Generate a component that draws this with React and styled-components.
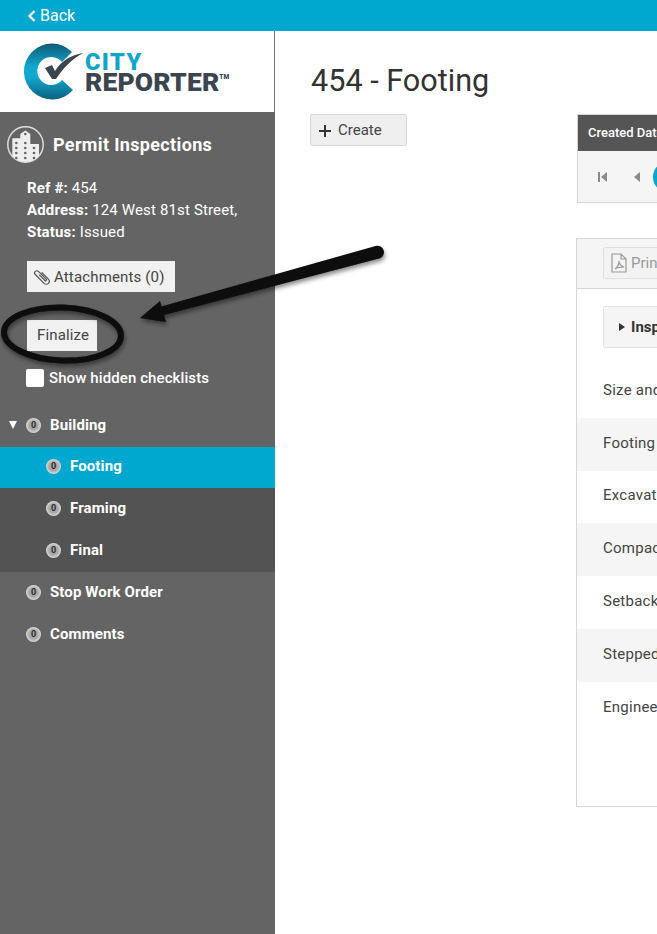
import React from "react";
import styled, { createGlobalStyle } from "styled-components";

const GlobalStyle = createGlobalStyle`
    html, body {
        margin: 0;
        padding: 0;
        height: 100%;
        overflow: hidden;
        background: #fff;
        font-family: Roboto, "Liberation Sans", sans-serif;
        color: #333;
    }
    #root { height: 100%; }
    * { box-sizing: border-box; }
`;

const Page = styled.div`
    position: relative;
    width: 657px;
    height: 934px;
    overflow: hidden;
    display: flex;
    flex-direction: column;
`;
const TopBar = styled.div`
    height: 31px;
    flex: none;
    background: #00a7ce;
    color: #fff;
    font-size: 16px;
    display: flex;
    align-items: center;
    gap: 4px;
    padding-left: 27px;
`;
const Body = styled.div`
    flex: 1;
    display: flex;
    min-height: 0;
`;
const Sidebar = styled.aside`
    width: 275px;
    flex: none;
    background: #646464;
    color: #fff;
`;
const LogoBox = styled.div`
    height: 81px;
    background: #fff;
    border-right: 1px solid #777;
    display: flex;
    align-items: flex-start;
    padding: 12px 0 0 23px;
`;
const LogoWords = styled.div`
    margin: 9px 0 0 4px;
    font-family: Roboto, sans-serif;
    font-weight: 900;
    line-height: 20px;
`;
const LogoCity = styled.div`
    font-size: 23.5px;
    color: #12a5cb;
    letter-spacing: 1.4px;
`;
const LogoReporter = styled.div`
    font-size: 26.5px;
    color: #3b4550;
    letter-spacing: 0.15px;
    display: flex;
    align-items: flex-start;
`;
const Tm = styled.span`
    font-size: 6.5px;
    line-height: 9px;
    margin-top: 1px;
    letter-spacing: 0;
`;
const SideHead = styled.div`
    display: flex;
    align-items: center;
    gap: 9px;
    padding: 14px 0 0 7px;
`;
const SideTitle = styled.h2`
    margin: 0;
    font-size: 18px;
    font-weight: 700;
    letter-spacing: 0.35px;
`;
const Meta = styled.div`
    margin-top: 14px;
    padding-left: 27px;
    font-size: 15px;
    line-height: 22px;
    letter-spacing: 0.15px;
    b { font-weight: 700; }
`;
const SideButton = styled.button`
    display: flex;
    align-items: center;
    gap: 3px;
    height: 31px;
    padding: 0 10px 0 6px;
    border: 0;
    background: #f1f1f1;
    color: #444;
    font-family: inherit;
    font-size: 15px;
    letter-spacing: 0.15px;
`;
const SideActions = styled.div`
    margin-top: 18px;
    padding-left: 27px;
    display: flex;
    flex-direction: column;
    align-items: flex-start;
    gap: 28px;
`;
const FinalizeButton = styled(SideButton)`
    padding: 0 8px 2px 10px;
`;
const HiddenRow = styled.label`
    display: flex;
    align-items: center;
    gap: 5px;
    margin: 18px 0 0 26px;
    font-size: 15px;
    font-weight: 500;
    letter-spacing: 0.1px;
`;
const Box = styled.span`
    width: 18px;
    height: 18px;
    border-radius: 2px;
    background: #fff;
`;
const Tree = styled.nav`
    margin-top: 18px;
`;
const Node = styled.div`
    display: flex;
    align-items: center;
    height: ${(p) => p.$height || 42}px;
    padding: 0 0 ${(p) => (p.$height ? 3 : 2)}px ${(p) => (p.$sub ? 46 : 26)}px;
    background: ${(p) => p.$bg || "transparent"};
    font-size: 15px;
    font-weight: 700;
    letter-spacing: 0.12px;
    position: relative;
`;
const Caret = styled.span`
    position: absolute;
    left: 9px;
    top: 16px;
    border-left: 4.5px solid transparent;
    border-right: 4.5px solid transparent;
    border-top: 8px solid #fff;
`;
const Badge = styled.span`
    width: 15px;
    height: 15px;
    margin-right: 9px;
    border-radius: 50%;
    background: radial-gradient(circle, #a8a8a8 0 40%, #dcdcdc 72%, #9a9a9a 100%);
    color: #2c2c2c;
    font-size: 9px;
    font-weight: 700;
    letter-spacing: 0;
    display: flex;
    align-items: center;
    justify-content: center;
`;
const Main = styled.main`
    flex: 1;
    min-width: 0;
    overflow: hidden;
    padding: 32px 0 0 36px;
`;
const Title = styled.h1`
    margin: 0;
    font-size: 30.6px;
    font-weight: 400;
    line-height: 36px;
    color: #333;
    white-space: nowrap;
`;
const Columns = styled.div`
    margin: 15px 0 0 -1px;
    display: flex;
    align-items: flex-start;
`;
const CreateButton = styled.button`
    width: 97px;
    height: 32px;
    flex: none;
    display: flex;
    align-items: center;
    gap: 7px;
    padding: 0 0 0 8px;
    background: #efefef;
    border: 1px solid #d8d8d8;
    border-radius: 2px;
    color: #444;
    font-family: inherit;
    font-size: 15px;
    svg { margin-top: 2px; }
`;
const RightCol = styled.div`
    margin-left: 169px;
    width: 500px;
    flex: none;
`;
const GridCard = styled.section`
    margin-left: 1px;
    height: 89px;
    border: 1px solid #d4d4d4;
`;
const GridHead = styled.div`
    height: 36px;
    background: #555;
    color: #fff;
    font-size: 13px;
    font-weight: 500;
    display: flex;
    align-items: center;
    padding: 0 0 2px 10px;
    white-space: nowrap;
`;
const Pager = styled.div`
    height: 51px;
    background: #f5f5f5;
    display: flex;
    align-items: center;
    padding-left: 20px;
`;
const PageCircle = styled.span`
    width: 32px;
    height: 32px;
    margin-left: 11px;
    border-radius: 50%;
    background: #00a7ce;
`;
const PagerIcon = styled.svg`
    width: 10px;
    height: 10px;
    margin-right: ${(p) => p.$gap}px;
    fill: #8a8a8a;
`;
const Panel = styled.section`
    margin-top: 35px;
    height: 569px;
    border: 1px solid #d6d6d6;
    border-right: 0;
`;
const PanelBar = styled.div`
    height: 50px;
    background: #f5f5f5;
    border-bottom: 1px solid #d6d6d6;
    padding: 8px 0 0 26px;
`;
const PrintButton = styled.div`
    width: 120px;
    height: 32px;
    border: 1px solid #e0e0e0;
    border-radius: 2px;
    background: #f3f3f3;
    color: #999;
    font-size: 15px;
    display: flex;
    align-items: center;
    gap: 3px;
    padding-left: 6px;
`;
const InspectBar = styled.div`
    margin: 17px 0 17px 26px;
    height: 42px;
    border: 1px solid #e2e2e2;
    border-radius: 2px;
    background: #f5f5f5;
    display: flex;
    align-items: center;
    gap: 6px;
    padding-left: 15px;
    font-size: 15px;
    font-weight: 700;
    color: #333;
`;
const InspectCaret = styled.span`
    border-top: 4px solid transparent;
    border-bottom: 4px solid transparent;
    border-left: 6px solid #333;
`;
const Row = styled.div`
    height: 52.8px;
    padding: 0 0 3px 26px;
    display: flex;
    align-items: center;
    background: ${(p) => (p.$alt ? "#f5f5f5" : "#fff")};
    font-size: 15px;
    letter-spacing: 0.25px;
    color: #444;
    white-space: nowrap;
`;
const Annotation = styled.svg`
    position: absolute;
    left: 0;
    top: 0;
    width: 657px;
    height: 934px;
    pointer-events: none;
    overflow: visible;
`;

const tree = [
    { name: "Building", caret: true },
    { name: "Footing", sub: true, bg: "#00a7ce", height: 41 },
    { name: "Framing", sub: true, bg: "#535353" },
    { name: "Final", sub: true, bg: "#535353" },
    { name: "Stop Work Order" },
    { name: "Comments" },
];

const rows = ["Size and", "Footing Width", "Excavation", "Compaction", "Setback", "Stepped", "Engineer"];

function CityMark() {
    return (
        <svg width="58" height="58" viewBox="0 0 58 58" style={{ flex: "none", overflow: "visible" }}>
            <defs>
                <linearGradient id="cGrad" x1="0.7" y1="0" x2="0.7" y2="1">
                    <stop offset="0" stopColor="#0e5b78" />
                    <stop offset="0.42" stopColor="#12a9cf" />
                    <stop offset="0.6" stopColor="#12a9cf" />
                    <stop offset="1" stopColor="#0b5f7e" />
                </linearGradient>
            </defs>
            <path d="M49 9A28 28 0 1 0 50 47L39 37A14 14 0 1 1 39 19Z" fill="url(#cGrad)" />
            <path d="M22 25L29 22L32 28C38 18 48 12 60 10C49 16 40 25 33 36L29 36Z" fill="#3b4550" />
        </svg>
    );
}

function BuildingIcon() {
    const windows = [
        [18.3, 8], [9.3, 17], [18.3, 17],
        [9.3, 22], [18.3, 22], [27, 22],
        [9.3, 27], [18.3, 27], [27, 27],
        [9.3, 32], [18.3, 32], [27, 32],
    ];
    return (
        <svg width="37" height="37" viewBox="0 0 37 37" style={{ flex: "none" }}>
            <circle cx="18.500" cy="18.500" r="17.700" fill="none" stroke="#ddd" strokeWidth="1.500" />
            <path d="M5.300 30V12.300H13.300V8L18.300 4.500L23.300 8V18H32V30Q26 36 18.500 36Q11 36 5.300 30Z" fill="#eee" />
            {windows.map(([x, y]) => (
                <circle key={`${x}-${y}`} cx={x} cy={y} r="1.300" fill="#646464" />
            ))}
        </svg>
    );
}

function ClipIcon() {
    return (
        <svg width="18" height="18" viewBox="0 0 18 18" fill="none" stroke="#555" strokeWidth="1.200" strokeLinecap="round">
            <g transform="translate(9 9) rotate(-45)">
                <path d="M3 -3V6a3 3 0 0 1 -6 0V-6.500a2.200 2.200 0 0 1 4.400 0V4.500a.9 .9 0 0 1 -1.800 0V-3" />
            </g>
        </svg>
    );
}

function PdfIcon() {
    return (
        <svg width="18" height="20" viewBox="0 0 18 20" fill="none" stroke="#999" strokeWidth="1.200">
            <path d="M2 1h9l5 5v13H2zM11 1v5h5" />
            <path d="M5 16c3-2 4-5 4-8 0 3 2 5 5 6-3 0-6 0-9 2z" />
        </svg>
    );
}

export default function App() {
    return (
        <Page>
            <GlobalStyle />
            <TopBar>
                <svg width="9" height="14" viewBox="0 0 9 14" fill="none" stroke="#fff" strokeWidth="2.200">
                    <path d="M7.500 2L2.500 7l5 5" />
                </svg>
                Back
            </TopBar>
            <Body>
                <Sidebar>
                    <LogoBox>
                        <CityMark />
                        <LogoWords>
                            <LogoCity>CITY</LogoCity>
                            <LogoReporter>
                                REPORTER<Tm>TM</Tm>
                            </LogoReporter>
                        </LogoWords>
                    </LogoBox>
                    <SideHead>
                        <BuildingIcon />
                        <SideTitle>Permit Inspections</SideTitle>
                    </SideHead>
                    <Meta>
                        <div><b>Ref #:</b> 454</div>
                        <div><b>Address:</b> 124 West 81st Street,</div>
                        <div><b>Status:</b> Issued</div>
                    </Meta>
                    <SideActions>
                        <SideButton>
                            <ClipIcon />
                            Attachments (0)
                        </SideButton>
                        <FinalizeButton>Finalize</FinalizeButton>
                    </SideActions>
                    <HiddenRow>
                        <Box />
                        Show hidden checklists
                    </HiddenRow>
                    <Tree>
                        {tree.map((n) => (
                            <Node key={n.name} $sub={n.sub} $bg={n.bg} $height={n.height}>
                                {n.caret && <Caret />}
                                <Badge>0</Badge>
                                {n.name}
                            </Node>
                        ))}
                    </Tree>
                </Sidebar>
                <Main>
                    <Title>454 - Footing</Title>
                    <Columns>
                        <CreateButton>
                            <svg width="12" height="12" viewBox="0 0 12 12" stroke="#333" strokeWidth="2">
                                <path d="M6 0v12M0 6h12" />
                            </svg>
                            Create
                        </CreateButton>
                        <RightCol>
                            <GridCard>
                                <GridHead>Created Date</GridHead>
                                <Pager>
                                    <PagerIcon viewBox="0 0 10 10" $gap={24}>
                                        <path d="M0 0h2v10H0zM9 0v10L3 5z" />
                                    </PagerIcon>
                                    <PagerIcon viewBox="0 0 10 10" $gap={0}>
                                        <path d="M8 0v10L2 5z" />
                                    </PagerIcon>
                                    <PageCircle />
                                </Pager>
                            </GridCard>
                            <Panel>
                                <PanelBar>
                                    <PrintButton>
                                        <PdfIcon />
                                        Print
                                    </PrintButton>
                                </PanelBar>
                                <InspectBar>
                                    <InspectCaret />
                                    Inspection
                                </InspectBar>
                                {rows.map((r, i) => (
                                    <Row key={r} $alt={i % 2 === 1}>{r}</Row>
                                ))}
                            </Panel>
                        </RightCol>
                    </Columns>
                </Main>
            </Body>
            <Annotation viewBox="0 0 657 934">
                <defs>
                    <filter id="soft" x="-10%" y="-30%" width="120%" height="170%">
                        <feDropShadow dx="1" dy="3" stdDeviation="2" floodColor="#000" floodOpacity="0.45" />
                    </filter>
                </defs>
                <g filter="url(#soft)">
                    <ellipse cx="62.500" cy="334" rx="58.500" ry="26.500" fill="none" stroke="#0a0a0a" strokeWidth="6" transform="rotate(2 62 334)" />
                    <path d="M156 308L376.500 245.800A6.500 6.500 0 0 1 380 258.200L160 316Z" fill="#0a0a0a" />
                    <path d="M140 318L160 301 166 322z" fill="#0a0a0a" />
                </g>
            </Annotation>
        </Page>
    );
}
